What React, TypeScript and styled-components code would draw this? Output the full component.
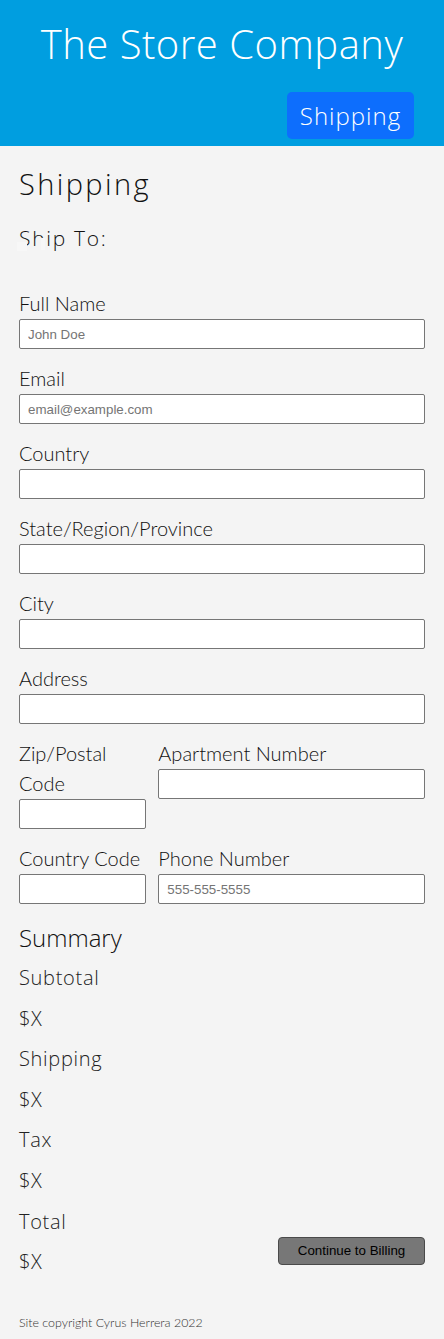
import React from "react";
import styled, { createGlobalStyle } from "styled-components";

const GlobalStyle = createGlobalStyle`
  html, body { margin: 0; padding: 0; }
  body { background: #f4f4f4; }
  * { box-sizing: border-box; }
`;

const display = `"Open Sans", "Liberation Sans", sans-serif`;
const body = `Lato, "Liberation Sans", sans-serif`;

const Page = styled.div`
  background: #f4f4f4;
  min-height: 1339px;
  display: flex;
  flex-direction: column;
`;

const Header = styled.header`
  background: #009ee0;
  height: 146px;
  display: flex;
  flex-direction: column;
  padding-top: 18px;
`;

const Brand = styled.h1`
  margin: 0;
  font-family: ${display};
  font-weight: 300;
  font-size: 40px;
  line-height: 52px;
  color: #fff;
  text-align: center;
  letter-spacing: 0.5px;
`;

const Nav = styled.nav`
  display: flex;
  justify-content: flex-end;
  padding-right: 30px;
  margin-top: 22px;
`;

const NavButton = styled.button`
  height: 47px;
  width: 127px;
  border: none;
  border-radius: 5px;
  background: #0d6efd;
  color: #fff;
  font-family: ${display};
  font-weight: 300;
  font-size: 24px;
  letter-spacing: 1px;
  padding: 0;
`;

const Main = styled.main`
  padding: 0 19px;
  display: flex;
  flex-direction: column;
`;

const PageTitle = styled.h2`
  margin: 18px 0 0;
  font-family: ${display};
  font-weight: 300;
  font-size: 29px;
  line-height: 40px;
  letter-spacing: 2.4px;
  color: #111;
`;

const ShipTo = styled.h3`
  position: relative;
  margin: 19px 0 0;
  font-family: ${display};
  font-weight: 300;
  font-size: 21px;
  line-height: 30px;
  letter-spacing: 1.7px;
  color: #111;
`;

const Smudge = styled.span<{ $left: number; $top: number; $w: number; $h: number }>`
  position: absolute;
  left: ${(p) => p.$left}px;
  top: ${(p) => p.$top}px;
  width: ${(p) => p.$w}px;
  height: ${(p) => p.$h}px;
  background: #f7f7f7;
`;

const Form = styled.form`
  margin-top: 35px;
  display: flex;
  flex-direction: column;
`;

const Field = styled.div`
  display: flex;
  flex-direction: column;
  margin-bottom: 14px;
`;

const Label = styled.label`
  font-family: ${body};
  font-weight: 300;
  font-size: 20px;
  line-height: 30px;
  color: #111;
  margin-bottom: 1px;
`;

const Input = styled.input`
  height: 30px;
  width: 100%;
  border: 1px solid #767676;
  border-radius: 2px;
  background: #fff;
  padding: 0 8px;
  font-family: Arial, "Liberation Sans", sans-serif;
  font-size: 13.33px;
  &::placeholder { color: #757575; }
`;

const Row = styled.div`
  display: grid;
  grid-template-columns: calc((100% + 12px) / 3 - 12px) 1fr;
  column-gap: 12px;
`;

const SummaryTitle = styled.h3`
  margin: 4px 0 0;
  font-family: ${display};
  font-weight: 300;
  font-size: 24px;
  line-height: 32px;
  color: #111;
`;

const SummaryBody = styled.div`
  display: flex;
  justify-content: space-between;
  align-items: flex-end;
`;

const SummaryList = styled.div`
  display: flex;
  flex-direction: column;
  padding-top: 4px;
`;

const SummaryItem = styled.p`
  margin: 0;
  font-family: ${display};
  font-weight: 300;
  font-size: 20px;
  line-height: 40.6px;
  letter-spacing: 0.7px;
  color: #222;
`;

const BillingButton = styled.button`
  width: 147px;
  height: 28px;
  margin-bottom: 18px;
  background: #777;
  border: 1px solid #4a4a4a;
  border-radius: 4px;
  font-family: Arial, "Liberation Sans", sans-serif;
  font-size: 13.33px;
  color: #000;
`;

const Footer = styled.footer`
  padding: 32px 19px 0;
  font-family: ${body};
  font-weight: 300;
  font-size: 12.4px;
  color: #333;
`;

const summary = ["Subtotal", "$X", "Shipping", "$X", "Tax", "$X", "Total", "$X"];

export default function App() {
  return (
    <Page>
      <GlobalStyle />
      <Header>
        <Brand>The Store Company</Brand>
        <Nav>
          <NavButton>Shipping</NavButton>
        </Nav>
      </Header>
      <Main>
        <PageTitle>Shipping</PageTitle>
        <ShipTo>
          Ship To:
          <Smudge $left={-2} $top={19} $w={10} $h={9} />
          <Smudge $left={22} $top={15} $w={4} $h={12} />
        </ShipTo>
        <Form>
          <Field>
            <Label>Full Name</Label>
            <Input placeholder="John Doe" />
          </Field>
          <Field>
            <Label>Email</Label>
            <Input placeholder="email@example.com" />
          </Field>
          <Field>
            <Label>Country</Label>
            <Input />
          </Field>
          <Field>
            <Label>State/Region/Province</Label>
            <Input />
          </Field>
          <Field>
            <Label>City</Label>
            <Input />
          </Field>
          <Field>
            <Label>Address</Label>
            <Input />
          </Field>
          <Row>
            <Field>
              <Label>Zip/Postal Code</Label>
              <Input />
            </Field>
            <Field>
              <Label>Apartment Number</Label>
              <Input />
            </Field>
          </Row>
          <Row>
            <Field>
              <Label>Country Code</Label>
              <Input />
            </Field>
            <Field>
              <Label>Phone Number</Label>
              <Input placeholder="555-555-5555" />
            </Field>
          </Row>
        </Form>
        <SummaryTitle>Summary</SummaryTitle>
        <SummaryBody>
          <SummaryList>
            {summary.map((s, i) => (
              <SummaryItem key={i}>{s}</SummaryItem>
            ))}
          </SummaryList>
          <BillingButton type="button">Continue to Billing</BillingButton>
        </SummaryBody>
      </Main>
      <Footer>Site copyright Cyrus Herrera 2022</Footer>
    </Page>
  );
}
